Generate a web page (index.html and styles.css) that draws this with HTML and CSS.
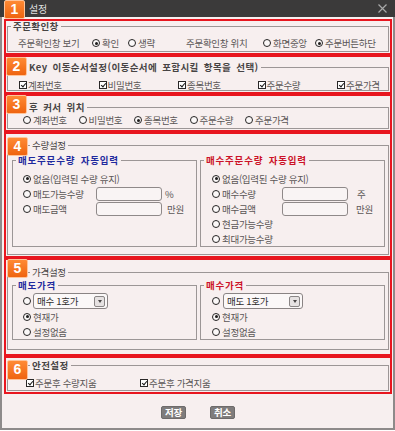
FILE: index.html
```html
<!DOCTYPE html>
<html lang="ko">
<head>
<meta charset="utf-8">
<title>설정</title>
<link rel="stylesheet" href="styles.css">
</head>
<body>
<div class="window">
  <div class="titlebar">
    <span class="title">설정</span>
    <svg class="close" width="9" height="9" viewBox="0 0 9 9"><path d="M0.5 0.5L8.5 8.5M8.5 0.5L0.5 8.5" stroke="#a9a9a9" stroke-width="1.2" fill="none"/></svg>
  </div>
  <div class="client">
    <section class="sec s1">
      <span class="badge b1">1</span>
      <fieldset class="grp">
        <legend class="lg bold">주문확인창</legend>
        <div class="row1">
          <span class="lbl w74">주문확인창 보기</span>
          <span class="opt w36"><i class="rd on"></i>확인</span>
          <span class="opt w58"><i class="rd"></i>생략</span>
          <span class="lbl w77">주문확인창 위치</span>
          <span class="opt w52"><i class="rd"></i>화면중앙</span>
          <span class="opt"><i class="rd on"></i>주문버튼하단</span>
        </div>
      </fieldset>
    </section>

    <section class="sec s2">
      <span class="badge b2">2</span>
      <fieldset class="grp">
        <legend class="lg bold lg-k">Key 이동순서설정(이동순서에 포함시킬 항목을 선택)</legend>
        <div class="row2">
          <span class="opt"><i class="cb"></i>계좌번호</span>
          <span class="opt"><i class="cb"></i>비밀번호</span>
          <span class="opt"><i class="cb"></i>종목번호</span>
          <span class="opt"><i class="cb"></i>주문수량</span>
          <span class="opt"><i class="cb"></i>주문가격</span>
        </div>
      </fieldset>
    </section>

    <section class="sec s3">
      <span class="badge b3">3</span>
      <fieldset class="grp">
        <legend class="lg bold lg-k">후 커서 위치</legend>
        <div class="row3">
          <span class="opt"><i class="rd"></i>계좌번호</span>
          <span class="opt"><i class="rd"></i>비밀번호</span>
          <span class="opt"><i class="rd on"></i>종목번호</span>
          <span class="opt"><i class="rd"></i>주문수량</span>
          <span class="opt"><i class="rd"></i>주문가격</span>
        </div>
      </fieldset>
    </section>

    <section class="sec s4">
      <span class="badge b4">4</span>
      <fieldset class="grp">
        <legend class="lg lg-s">수량설정</legend>
        <div class="cols cols4">
          <fieldset class="sub">
            <legend class="lg bold blue">매도주문수량 자동입력</legend>
            <div class="rows">
              <div class="line"><span class="opt"><i class="rd on"></i>없음(입력된 수량 유지)</span></div>
              <div class="line"><span class="opt wl"><i class="rd"></i>매도가능수량</span><span class="inp"></span><span class="unit">%</span></div>
              <div class="line"><span class="opt wl"><i class="rd"></i>매도금액</span><span class="inp"></span><span class="unit u2">만원</span></div>
            </div>
          </fieldset>
          <fieldset class="sub right">
            <legend class="lg bold red">매수주문수량 자동입력</legend>
            <div class="rows">
              <div class="line"><span class="opt"><i class="rd on"></i>없음(입력된 수량 유지)</span></div>
              <div class="line"><span class="opt wr"><i class="rd"></i>매수수량</span><span class="inp"></span><span class="unit u3">주</span></div>
              <div class="line"><span class="opt wr"><i class="rd"></i>매수금액</span><span class="inp"></span><span class="unit u4">만원</span></div>
              <div class="line"><span class="opt"><i class="rd"></i>현금가능수량</span></div>
              <div class="line"><span class="opt"><i class="rd"></i>최대가능수량</span></div>
            </div>
          </fieldset>
        </div>
      </fieldset>
    </section>

    <section class="sec s5">
      <span class="badge b5">5</span>
      <fieldset class="grp">
        <legend class="lg lg-s">가격설정</legend>
        <div class="cols cols5">
          <fieldset class="sub">
            <legend class="lg bold blue">매도가격</legend>
            <div class="rows rows5">
              <div class="line tall"><i class="rd"></i><span class="sel sel-l"><span class="seltext">매수 1호가</span><span class="arrow"></span></span></div>
              <div class="line"><span class="opt"><i class="rd on"></i>현재가</span></div>
              <div class="line"><span class="opt"><i class="rd"></i>설정없음</span></div>
            </div>
          </fieldset>
          <fieldset class="sub right">
            <legend class="lg bold red">매수가격</legend>
            <div class="rows rows5">
              <div class="line tall"><i class="rd"></i><span class="sel sel-r"><span class="seltext">매도 1호가</span><span class="arrow"></span></span></div>
              <div class="line"><span class="opt"><i class="rd on"></i>현재가</span></div>
              <div class="line"><span class="opt"><i class="rd"></i>설정없음</span></div>
            </div>
          </fieldset>
        </div>
      </fieldset>
    </section>

    <section class="sec s6">
      <span class="badge b6">6</span>
      <fieldset class="grp">
        <legend class="lg bold lg-s">안전설정</legend>
        <div class="row6">
          <span class="opt"><i class="cb"></i>주문후 수량지움</span>
          <span class="opt"><i class="cb"></i>주문후 가격지움</span>
        </div>
      </fieldset>
    </section>

    <div class="btns">
      <span class="btn">저장</span>
      <span class="btn">취소</span>
    </div>
  </div>
</div>
</body>
</html>
```

FILE: styles.css
```css
* { box-sizing: border-box; }
html, body { margin: 0; padding: 0; background: #ffffff; }
body {
  font-family: "Noto Sans CJK KR", "Noto Sans", sans-serif;
  font-size: 9.5px;
  letter-spacing: -0.3px;
  color: #5a5656;
}

.window {
  width: 395px;
  height: 430px;
  display: flex;
  flex-direction: column;
}

.titlebar {
  height: 17px;
  flex: none;
  background: #3b3a3a;
  display: flex;
  align-items: center;
  justify-content: space-between;
  padding: 0 8px 0 29px;
}
.title { color: #dedede; font-size: 10px; line-height: 17px; }
.close { display: block; }

.client {
  flex: 1;
  background: #f7efef;
  border-left: 2px solid #8e8a8a;
  border-right: 2px solid #8e8a8a;
  border-bottom: 2px solid #8e8a8a;
  padding: 2px 1px 0 2px;
  display: flex;
  flex-direction: column;
}

.sec {
  position: relative;
  flex: none;
  border: 2px solid #e8161f;
  display: flex;
  flex-direction: column;
  padding: 0 1px 1px 1px;
}
.s1 { height: 36px; padding-top: 0; }
.s2 { height: 39px; padding-top: 5px; }
.s3 { height: 38px; padding-top: 6px; }
.s4 { height: 126px; padding-top: 6px; }
.s5 { height: 98px; padding-top: 7px; padding-bottom: 4px; }
.s6 { height: 38px; padding-top: 2px; }

.badge {
  position: absolute;
  width: 21px;
  height: 19px;
  background: linear-gradient(#ff8a34, #ef6410);
  border: 1px solid #ffc49a;
  border-radius: 2px;
  color: #ffffff;
  font-family: "Liberation Sans", Arial, sans-serif;
  font-weight: bold;
  font-size: 14px;
  letter-spacing: 0;
  line-height: 17px;
  text-align: center;
  z-index: 2;
}
.b1 { left: -2px; top: -21px; }
.b2 { left: 0; top: 0; }
.b3 { left: 0; top: -1px; }
.b4 { left: 1px; top: 3px; }
.b5 { left: 1px; top: -1px; }
.b6 { left: 1px; top: 2px; height: 20px; }

fieldset {
  margin: 0;
  padding: 0;
  min-width: 0;
  border: 1px solid #9c9696;
}
.grp {
  flex: 1;
  display: flex;
  flex-direction: column;
}
.lg {
  padding: 0 2px;
  margin-left: 3px;
  line-height: 10px;
  color: #474444;
}
.lg-k { margin-left: 19px; }
.lg-s { margin-left: 22px; }
.bold { font-weight: bold; letter-spacing: 0.4px; word-spacing: 2px; }
.sub .bold { letter-spacing: 0.8px; }
.blue { color: #1f2a9e; }
.red { color: #cc1228; }

.opt {
  display: inline-flex;
  align-items: center;
  white-space: nowrap;
}
.lbl { white-space: nowrap; }
.rd {
  display: inline-block;
  flex: none;
  position: relative;
  width: 8px;
  height: 8px;
  border: 1px solid #262424;
  border-radius: 50%;
  margin-right: 2px;
  background: #fbf8f8;
}
.rd.on::after {
  content: "";
  position: absolute;
  left: 1.5px;
  top: 1.5px;
  width: 3px;
  height: 3px;
  border-radius: 50%;
  background: #1e1c1c;
}
.cb {
  display: inline-block;
  flex: none;
  position: relative;
  width: 8px;
  height: 8px;
  border: 1px solid #2a2828;
  background: #ffffff;
  margin-right: 1px;
}
.cb::after {
  content: "";
  position: absolute;
  left: 2px;
  top: 0px;
  width: 2px;
  height: 4px;
  border: solid #1c1a1a;
  border-width: 0 1.5px 1.5px 0;
  transform: rotate(40deg);
}

/* section 1 */
.row1 {
  display: flex;
  align-items: center;
  padding: 6px 0 0 10px;
  line-height: 12px;
}
.w74 { width: 74px; }
.w36 { width: 36px; }
.w58 { width: 58px; }
.w77 { width: 77px; }
.w52 { width: 52px; }

/* section 2 */
.row2 {
  display: grid;
  grid-template-columns: repeat(4, 79.5px) auto;
  padding: 8px 0 0 11px;
  line-height: 10px;
}
/* section 3 */
.row3 {
  display: grid;
  grid-template-columns: repeat(4, 55.5px) auto;
  padding: 3px 0 0 15px;
  line-height: 10px;
}

/* sections 4 and 5 */
.cols {
  flex: 1;
  display: grid;
  grid-template-columns: 185px 185px;
  column-gap: 3px;
}
.cols4 { padding: 5px 2px 2px 4px; }
.cols5 { padding: 3px 2px 6px 4px; }
.sub { display: block; }
.rows { padding: 6px 0 0 10px; }
.sub.right .rows { padding-left: 11px; }
.rows5 { padding-top: 3px; }
.line {
  display: flex;
  align-items: center;
  height: 15px;
}
.line.tall { height: 16px; }
.wl { width: 73px; }
.wr { width: 70px; }
.inp {
  display: block;
  width: 66px;
  height: 14px;
  border: 1px solid #8f8989;
  border-radius: 3px;
  background: #f9f4f4;
}
.unit { margin-left: 3px; }
.u2 { margin-left: 5px; }
.u3 { margin-left: 9px; }
.u4 { margin-left: 8px; }

.sel {
  display: flex;
  align-items: center;
  justify-content: space-between;
  height: 16px;
  border: 1px solid #8a8484;
  border-radius: 3px;
  background: #fbf8f8;
  padding: 0 2px 0 3px;
  color: #2f2d2d;
}
.sel-l { width: 75px; }
.sel-r { width: 80px; margin-left: 1px; }
.seltext { line-height: 14px; }
.arrow {
  position: relative;
  width: 11px;
  height: 11px;
  border: 1px solid #8a8686;
  border-radius: 2px;
  background: #e6e2e2;
}
.arrow::after {
  content: "";
  position: absolute;
  left: 2.5px;
  top: 3.5px;
  border-left: 2.5px solid transparent;
  border-right: 2.5px solid transparent;
  border-top: 3px solid #4a4747;
}

/* section 6 */
.row6 {
  display: grid;
  grid-template-columns: 114px auto;
  padding: 8px 0 0 18px;
  line-height: 10px;
}

/* buttons */
.btns {
  display: flex;
  justify-content: center;
  gap: 24px;
  margin-top: 12px;
}
.btn {
  width: 25px;
  height: 13px;
  border-radius: 2px;
  background: #7f7c7c;
  border: 1px solid #6d6a6a;
  color: #ffffff;
  font-weight: bold;
  font-size: 9.5px;
  line-height: 11px;
  text-align: center;
}
```
